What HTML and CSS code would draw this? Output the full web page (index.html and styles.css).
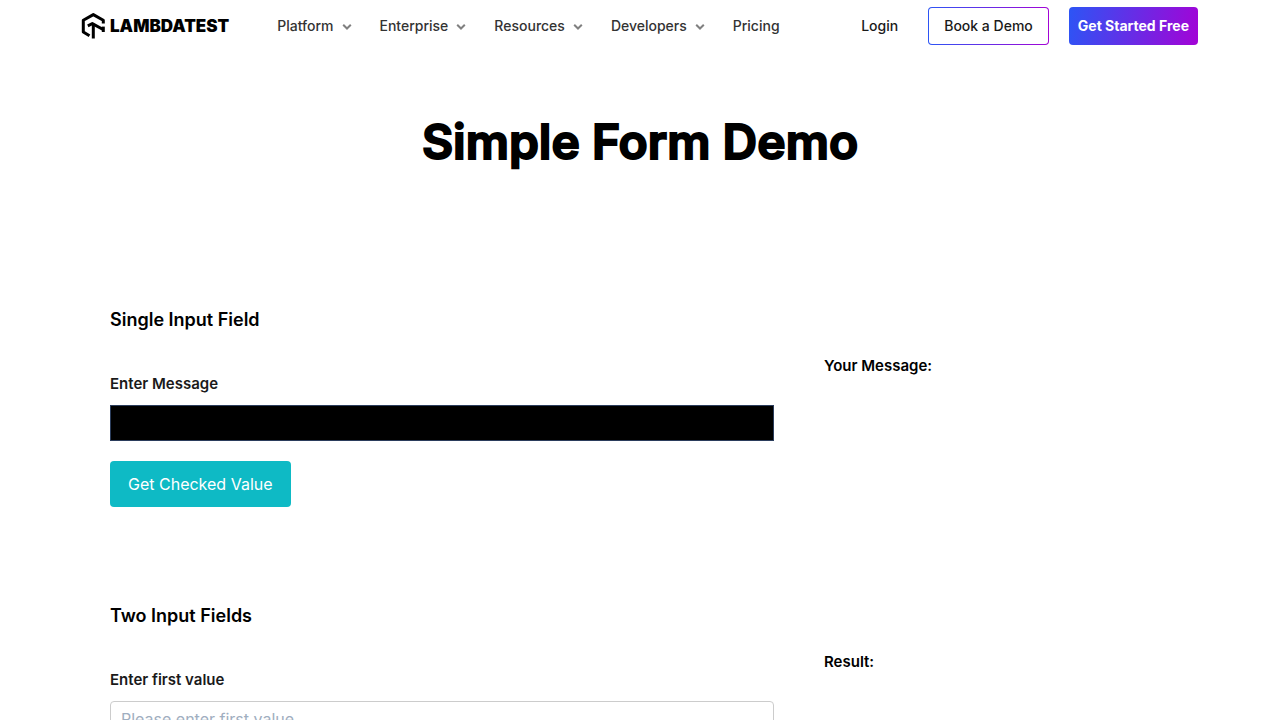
FILE: index.html
```html
<!DOCTYPE html>
<html lang="en">
<head>
<meta charset="utf-8">
<meta name="viewport" content="width=device-width, initial-scale=1">
<title>Simple Form Demo</title>
<link rel="stylesheet" href="styles.css">
</head>
<body>
<header class="header">
  <a class="logo" href="#">
    <svg class="logo-mark" viewBox="0 0 24 26" aria-hidden="true">
      <path d="M8.5 22.8 2.3 19V7.2L12.3 1.6l10 5.6v3.3" />
      <path d="M6.8 12.8 11.3 10.6 22.6 16.8" />
      <path d="M22.3 13.6V19" />
      <path d="M12.3 11.5V25.5" />
    </svg>
    <span class="logo-name">LAMBDATEST</span>
  </a>
  <nav class="nav">
    <button class="nav-item" type="button">Platform<svg class="chevron" viewBox="0 0 10 8" aria-hidden="true"><path d="M1.2 2.7 5 6.5 8.8 2.7"/></svg></button>
    <button class="nav-item" type="button">Enterprise<svg class="chevron" viewBox="0 0 10 8" aria-hidden="true"><path d="M1.2 2.7 5 6.5 8.8 2.7"/></svg></button>
    <button class="nav-item" type="button">Resources<svg class="chevron" viewBox="0 0 10 8" aria-hidden="true"><path d="M1.2 2.7 5 6.5 8.8 2.7"/></svg></button>
    <button class="nav-item" type="button">Developers<svg class="chevron" viewBox="0 0 10 8" aria-hidden="true"><path d="M1.2 2.7 5 6.5 8.8 2.7"/></svg></button>
    <a class="nav-item" href="#">Pricing</a>
  </nav>
  <div class="actions">
    <a class="login" href="#">Login</a>
    <a class="demo" href="#">Book a Demo</a>
    <a class="start" href="#">Get Started Free</a>
  </div>
</header>
<main>
  <h1 class="title">Simple Form Demo</h1>
  <section class="example">
    <form class="form">
      <h2 class="heading">Single Input Field</h2>
      <label class="label" for="message">Enter Message</label>
      <input class="field field-dark" id="message" type="text">
      <button class="submit" type="button">Get Checked Value</button>
    </form>
    <p class="result">Your Message:</p>
  </section>
  <section class="example">
    <form class="form">
      <h2 class="heading">Two Input Fields</h2>
      <label class="label" for="first">Enter first value</label>
      <input class="field" id="first" type="text" placeholder="Please enter first value">
    </form>
    <p class="result">Result:</p>
  </section>
</main>
</body>
</html>
```
FILE: styles.css
```css
* {
  box-sizing: border-box;
}

html {
  scrollbar-width: none;
}

body {
  margin: 0;
  background: #fff;
  color: #000;
  font-family: Inter, "Liberation Sans", sans-serif;
}

a {
  color: inherit;
  text-decoration: none;
}

button {
  border: 0;
  background: none;
  font-family: inherit;
  cursor: pointer;
}

.header {
  display: flex;
  align-items: center;
  max-width: 1120px;
  height: 52px;
  margin: 0 auto;
  padding: 0 2px 0 1px;
}

.logo {
  display: flex;
  align-items: center;
  gap: 5px;
}

.logo-mark {
  width: 24px;
  height: 26px;
  fill: none;
  stroke: #000;
  stroke-width: 3;
  stroke-linejoin: round;
}

.logo-name {
  font-size: 17px;
  font-weight: 900;
  line-height: 24px;
}

.nav {
  display: flex;
  align-items: center;
  gap: 28px;
  margin-left: 48px;
}

.nav-item {
  display: flex;
  align-items: center;
  gap: 8px;
  padding: 0;
  color: #333;
  font-size: 14px;
  font-weight: 500;
  line-height: 20px;
}

.chevron {
  width: 10px;
  height: 8px;
  fill: none;
  stroke: #808080;
  stroke-width: 2;
}

.actions {
  display: flex;
  align-items: center;
  margin-left: auto;
  font-size: 14px;
  font-weight: 500;
  line-height: 20px;
}

.login {
  margin-right: 30px;
  color: #1a1a1a;
}

.demo {
  margin-right: 20px;
  padding: 8px 15px;
  border: 1px solid transparent;
  border-radius: 4px;
  background: linear-gradient(#fff, #fff) padding-box, linear-gradient(90deg, #2c55f5, #a303d6) border-box;
  color: #1a1a1a;
}

.start {
  padding: 9px;
  border-radius: 4px;
  background: linear-gradient(100deg, #2c55f5, #a303d6);
  color: #fff;
  font-weight: 700;
}

.title {
  margin: 60px 0 110px;
  font-size: 48px;
  font-weight: 600;
  line-height: 60px;
  text-align: center;
  -webkit-text-stroke: 2px #000;
}

.example {
  display: grid;
  grid-template-columns: 664fr 346fr;
  gap: 50px;
  max-width: 1060px;
  margin: 0 auto;
  padding: 26px 0 71px;
}

.heading {
  margin: 0 0 41px;
  font-size: 18px;
  font-weight: 600;
  line-height: 24px;
}

.label {
  display: block;
  margin-bottom: 10px;
  color: #1a1a1a;
  font-size: 15px;
  font-weight: 600;
  line-height: 22px;
}

.field {
  display: block;
  width: 100%;
  height: 36px;
  padding: 0 10px;
  border: 1px solid #ccc;
  border-radius: 4px;
  font-family: inherit;
  font-size: 16px;
}

.field::placeholder {
  color: #a0aec0;
}

.field-dark {
  border-color: #2b3d5c;
  border-radius: 0;
  background: #000;
  color: #fff;
}

.submit {
  height: 46px;
  margin-top: 20px;
  padding: 0 18px;
  border-radius: 4px;
  background: #0ebac5;
  color: #fff;
  font-size: 16px;
}

.result {
  margin: 46px 0 0;
  font-size: 15px;
  font-weight: 600;
  line-height: 24px;
}
```
